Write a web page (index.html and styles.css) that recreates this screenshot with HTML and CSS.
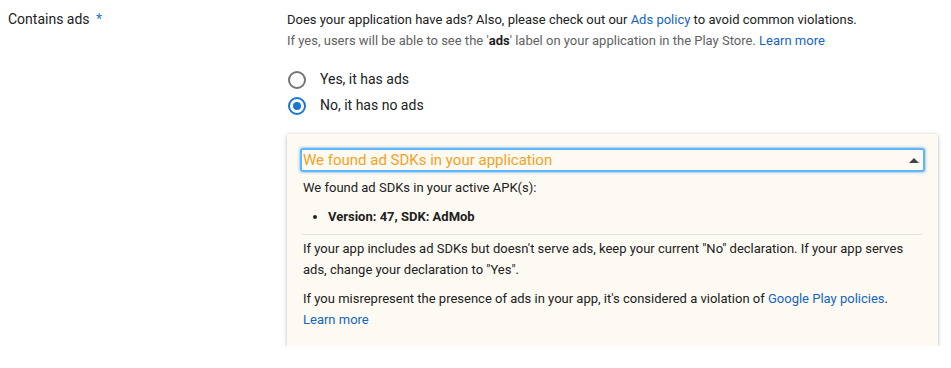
FILE: index.html
```html
<!DOCTYPE html>
<html lang="en">
<head>
    <meta charset="UTF-8">
    <title>Contains ads</title>
    <link rel="stylesheet" href="styles.css">
</head>
<body>
<div class="field">
    <div class="field-label">Contains ads <span class="req">*</span></div>
    <div class="field-body">
        <p class="desc">Does your application have ads? Also, please check out our <a href="#">Ads policy</a> to avoid common violations.</p>
        <p class="hint">If yes, users will be able to see the '<b>ads</b>' label on your application in the Play Store. <a href="#">Learn more</a></p>

        <div class="radios">
            <label class="radio"><span class="dot"></span>Yes, it has ads</label>
            <label class="radio checked"><span class="dot"></span>No, it has no ads</label>
        </div>

        <div class="notice">
            <div class="notice-head">
                <span>We found ad SDKs in your application</span>
                <span class="caret"></span>
            </div>
            <div class="notice-body">
                <p>We found ad SDKs in your active APK(s):</p>
                <ul>
                    <li>Version: 47, SDK: AdMob</li>
                </ul>
                <div class="rule"></div>
                <p>If your app includes ad SDKs but doesn't serve ads, keep your current "No" declaration. If your app serves ads, change your declaration to "Yes".</p>
                <p>If you misrepresent the presence of ads in your app, it's considered a violation of <a href="#">Google Play policies</a>. <a href="#">Learn more</a></p>
            </div>
        </div>
    </div>
</div>
</body>
</html>
```

FILE: styles.css
```css
*{
    margin: 0;
    padding: 0;
    box-sizing: border-box;
}
body{
    background-color: #ffffff;
    font-family: Roboto, "Liberation Sans", sans-serif;
    font-size: 13px;
    line-height: 21px;
    color: #212121;
}
a{
    color: #1565c0;
    text-decoration: none;
}
.field{
    display: grid;
    grid-template-columns: 279px 651px;
    padding: 9px 0 0 8px;
}
.field-label{
    font-size: 14px;
    color: #212121;
}
.req{
    color: #1976d2;
    margin-left: 3px;
}
.desc{
    color: #212121;
}
.hint{
    color: #616161;
}
.hint b{
    color: #212121;
}

/* radio buttons */
.radios{
    display: flex;
    flex-direction: column;
    gap: 5px;
    margin-top: 18px;
    padding-left: 1px;
}
.radio{
    display: flex;
    align-items: center;
    gap: 14px;
    font-size: 14px;
    color: #212121;
}
.radio .dot{
    width: 18px;
    height: 18px;
    border: 2px solid #757575;
    border-radius: 50%;
    display: flex;
    align-items: center;
    justify-content: center;
}
.radio.checked .dot{
    border-color: #1976d2;
}
.radio.checked .dot::after{
    content: "";
    width: 8px;
    height: 8px;
    border-radius: 50%;
    background-color: #1976d2;
}

/* notice panel */
.notice{
    margin-top: 18px;
    background-color: #fdfaf3;
    box-shadow: 0 1px 4px rgba(0,0,0,0.28);
    padding: 14px 13px 16px 13px;
}
.notice-head{
    display: flex;
    align-items: center;
    justify-content: space-between;
    height: 24px;
    border: 2px solid #64b5f6;
    border-radius: 3px;
    box-shadow: 0 0 2px 1px rgba(100,181,246,0.6);
    padding: 0 4px 0 1px;
    font-size: 15px;
    color: #f3a21f;
}
.caret{
    width: 0;
    height: 0;
    border-left: 5px solid transparent;
    border-right: 5px solid transparent;
    border-bottom: 5px solid #424242;
}
.notice-body{
    padding: 5px 3px 0 3px;
    color: #212121;
}
.notice-body ul{
    margin: 8px 0 0 0;
    padding-left: 25px;
    font-weight: bold;
}
.rule{
    height: 1px;
    background-color: #e0e0e0;
    margin: 7px 0 3px -1px;
}
.notice-body p + p{
    margin-top: 8px;
}
```
